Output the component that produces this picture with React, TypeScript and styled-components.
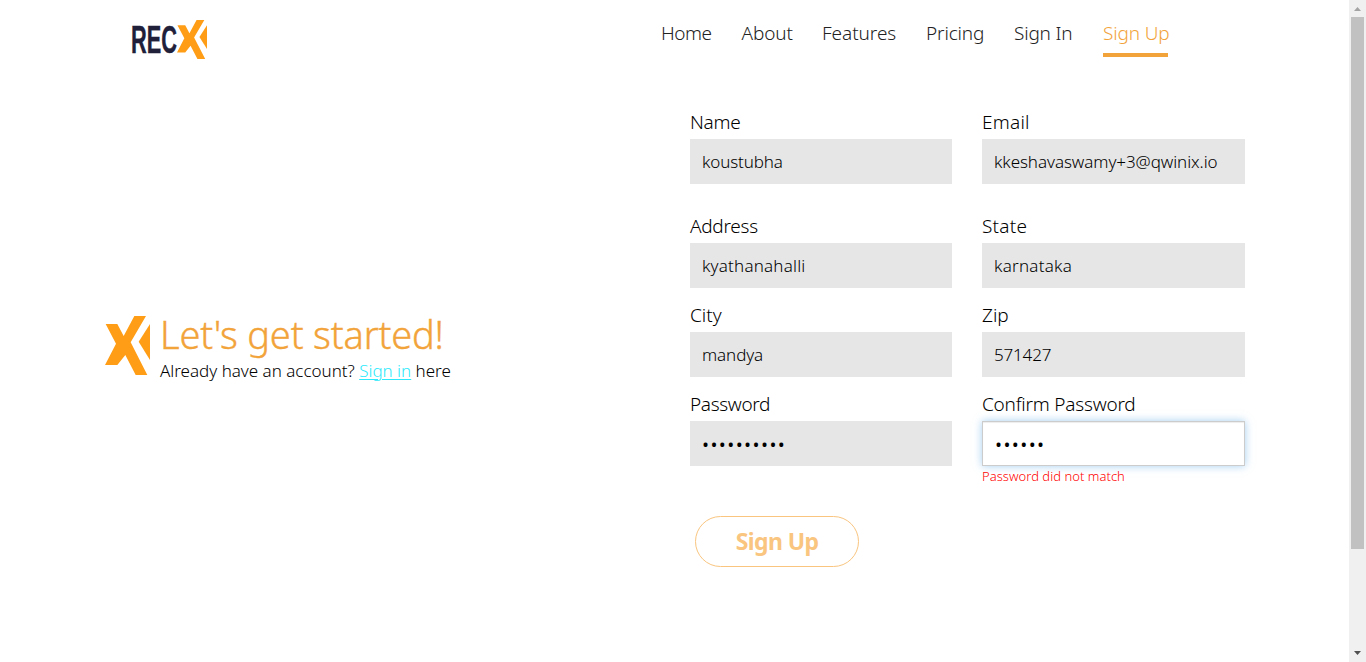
import React from "react";
import styled, { createGlobalStyle } from "styled-components";

const Global = createGlobalStyle`
  * { box-sizing: border-box; }
  html, body { margin: 0; height: 100%; overflow: hidden; background: #fff; }
  body { font-family: "Noto Sans", "Open Sans", sans-serif; font-weight: 300; color: #000; }
`;

const Window = styled.div`display: flex; height: 662px; width: 1366px;`;
const Page = styled.main`flex: 1; min-width: 0;`;
const Header = styled.header`display: flex; height: 80px; padding: 20px 0 0 131px;`;
const Brand = styled.a`display: flex; width: 530px;`;
const Nav = styled.nav`display: flex; gap: 30px; height: 37px;`;
const Tracked = styled.span<{ $track: number }>`letter-spacing: ${p => p.$track}px; white-space: nowrap;`;
const NavLink = styled.a<{ $width: number; $active?: boolean }>`
  width: ${p => p.$width}px;
  font-size: 19px;
  line-height: 27px;
  color: ${p => (p.$active ? "#f2a33a" : "#222")};
  border-bottom: ${p => (p.$active ? "4px solid #f2a33a" : "0")};
`;
const Content = styled.div`display: flex;`;
const Intro = styled.section`display: flex; width: 585px; height: 60px; margin: 236px 0 0 105px; gap: 10px;`;
const Title = styled.h1`
  margin: -5px 0 0;
  font-size: 38px;
  line-height: 46px;
  font-weight: 300;
  color: #f2a33a;
  -webkit-text-stroke: 0.4px #f2a33a;
`;
const Note = styled.p`margin: 3px 0 0; font-size: 17px; line-height: 22px;`;
const Link = styled.a`color: #2be9fb; text-decoration: underline; text-decoration-thickness: 1px; text-underline-offset: 2px;`;
const Form = styled.form`width: 555px; padding-top: 29px;`;
const Row = styled.div<{ $height: number }>`display: grid; grid-template-columns: 262px 263px; column-gap: 30px; height: ${p => p.$height}px;`;
const Label = styled.label`display: block; font-size: 19px; line-height: 26px; height: 30px; font-weight: 300;`;
const Control = styled.div<{ $focus?: boolean; $secret?: boolean }>`
  display: flex;
  align-items: center;
  height: 45px;
  padding: 0 ${p => (p.$secret ? 11 : p.$focus ? 11 : 12)}px;
  font-size: ${p => (p.$secret ? 24 : 17)}px;
  line-height: 24px;
  color: #000;
  background: ${p => (p.$focus ? "#fff" : "#e6e6e6")};
  border: ${p => (p.$focus ? "1px solid #ccc" : "0")};
  box-shadow: ${p => (p.$focus ? "inset 0 1px 1px rgba(0,0,0,.075), 0 0 8px rgba(102,175,233,.6)" : "none")};
`;
const Problem = styled.div`font-size: 13px; line-height: 20px; color: #ff0000;`;
const Submit = styled.button`
  display: block;
  width: 164px;
  height: 51px;
  margin: 0 0 0 5px;
  padding: 0 0 1px;
  border: 1px solid #f9c57f;
  border-radius: 26px;
  background: #fff;
  color: #f9c57f;
  font: 700 23px "Noto Sans", sans-serif;
`;
const Scrollbar = styled.aside`display: flex; flex-direction: column; align-items: center; justify-content: space-between; width: 17px; background: #f0f0f0;`;
const Thumb = styled.div`width: 13px; height: 532px; margin-bottom: auto; background: #c1c1c1;`;
const Arrow = styled.svg`display: block; width: 17px; height: 17px;`;
const Wordmark = styled.svg`display: block; overflow: visible;`;

const Mark = ({ width, height }: { width: number; height: number }) => (
  <svg width={width} height={height} viewBox="30 33 135 177" preserveAspectRatio="none" fill="#ff9e16">
    <path d="M32 57H67L86 93L118 33H153L107 112L157 210H122L91 150L67 180H30L63 116Z" />
    <path d="M165 57V165L131 110Z" />
  </svg>
);

const nav = [
  { text: "Home", width: 50.5, track: -0.5 },
  { text: "About", width: 50.5, track: -0.1 },
  { text: "Features", width: 74, track: -0.05 },
  { text: "Pricing", width: 58, track: -0.15 },
  { text: "Sign In", width: 59, track: -0.2 },
  { text: "Sign Up", width: 65, track: -0.15, active: true },
];

type Item = { label: string; value: string; lt: number; vt: number; focus?: boolean; secret?: boolean; error?: string };
const rows: { height: number; items: Item[] }[] = [
  { height: 104, items: [{ label: "Name", value: "koustubha", lt: -0.25, vt: -0.12 }, { label: "Email", value: "kkeshavaswamy+3@qwinix.io", lt: 0.25, vt: -0.07 }] },
  { height: 89, items: [{ label: "Address", value: "kyathanahalli", lt: -0.28, vt: 0.2 }, { label: "State", value: "karnataka", lt: 0.25, vt: 0.25 }] },
  { height: 89, items: [{ label: "City", value: "mandya", lt: 0, vt: -0.1 }, { label: "Zip", value: "571427", lt: 0, vt: -0.17 }] },
  {
    height: 125,
    items: [
      { label: "Password", value: "••••••••••", lt: -0.35, vt: -0.6, secret: true },
      { label: "Confirm Password", value: "••••••", lt: -0.22, vt: -0.6, secret: true, focus: true, error: "Password did not match" },
    ],
  },
];

export default function App() {
  return (
    <>
      <Global />
      <Window>
        <Page>
          <Header>
            <Brand>
              <Wordmark width="46" height="50" viewBox="0 0 46 50">
                <text x="0" y="33" textLength="46" lengthAdjust="spacingAndGlyphs" fontFamily="Liberation Sans, sans-serif" fontWeight="700" fontSize="39.5" fill="#20203a" stroke="#20203a" strokeWidth="0.4">REC</text>
              </Wordmark>
              <Mark width={30} height={39} />
            </Brand>
            <Nav>
              {nav.map(n => (
                <NavLink key={n.text} $width={n.width} $active={n.active}><Tracked $track={n.track}>{n.text}</Tracked></NavLink>
              ))}
            </Nav>
          </Header>
          <Content>
            <Intro>
              <Mark width={45} height={59} />
              <div>
                <Title><Tracked $track={-0.18}>Let's get started!</Tracked></Title>
                <Note><Tracked $track={-0.01}>Already have an account? <Link>Sign in</Link> here</Tracked></Note>
              </div>
            </Intro>
            <Form>
              {rows.map((r, i) => (
                <Row key={i} $height={r.height}>
                  {r.items.map(f => (
                    <div key={f.label}>
                      <Label><Tracked $track={f.lt}>{f.label}</Tracked></Label>
                      <Control $focus={f.focus} $secret={f.secret}><Tracked $track={f.vt}>{f.value}</Tracked></Control>
                      {f.error && <Problem><Tracked $track={0.03}>{f.error}</Tracked></Problem>}
                    </div>
                  ))}
                </Row>
              ))}
              <Submit type="button"><Tracked $track={-0.6}>Sign Up</Tracked></Submit>
            </Form>
          </Content>
        </Page>
        <Scrollbar>
          <Arrow viewBox="0 0 17 17"><path d="M5 11H12L8.5 7Z" fill="#a3a3a3" /></Arrow>
          <Thumb />
          <Arrow viewBox="0 0 17 17"><path d="M5 6H12L8.5 10Z" fill="#505050" /></Arrow>
        </Scrollbar>
      </Window>
    </>
  );
}
